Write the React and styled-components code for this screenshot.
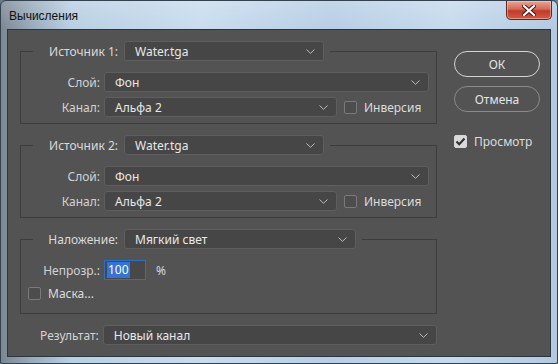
import React from "react";
import styled, { createGlobalStyle } from "styled-components";

const GlobalStyle = createGlobalStyle`
  html, body {
    margin: 0;
    padding: 0;
    background: #6b7a88;
  }
`;

const Chevron = () => (
  <svg width="9" height="5" viewBox="0 0 9 5">
    <path d="M0.5 0.5 L4.5 4.3 L8.5 0.5" fill="none" stroke="#bcbcbc" strokeWidth="1" />
  </svg>
);

const Dropdown = ({ value, width }) => (
  <Select $width={width}>
    <span>{value}</span>
    <Chevron />
  </Select>
);

const Check = ({ checked, label }) => (
  <CheckWrap>
    <Box $checked={checked}>
      {checked && (
        <svg width="11" height="9" viewBox="0 0 11 9">
          <path d="M1.5 4.5 L4.2 7.2 L9.5 1.5" fill="none" stroke="#2f2f2f" strokeWidth="2" />
        </svg>
      )}
    </Box>
    <CheckText>{label}</CheckText>
  </CheckWrap>
);

const SourceGroup = ({ n }) => (
  <Group>
    <Legend>
      <LegendLabel>Источник {n}:</LegendLabel>
      <Dropdown value="Water.tga" width={200} />
    </Legend>
    <Rows>
      <Row>
        <RowLabel>Слой:</RowLabel>
        <Dropdown value="Фон" width={325} />
      </Row>
      <Row>
        <RowLabel>Канал:</RowLabel>
        <Dropdown value="Альфа 2" width={233} />
        <Spacer $w={7} />
        <Check label="Инверсия" />
      </Row>
    </Rows>
  </Group>
);

const App = () => {
  return (
    <>
      <GlobalStyle />
      <Window>
        <TitleBar>
          <Title>Вычисления</Title>
          <CloseButton>
            <svg width="14" height="11" viewBox="0 0 14 11">
              <path d="M2 1 L12 10 M12 1 L2 10" stroke="#3a1410" strokeWidth="4" strokeLinecap="square" />
              <path d="M2 1 L12 10 M12 1 L2 10" stroke="#ffffff" strokeWidth="2.2" strokeLinecap="square" />
            </svg>
          </CloseButton>
        </TitleBar>
        <Client>
          <Main>
            <SourceGroup n={1} />
            <SourceGroup n={2} />
            <Group $mt={11}>
              <Legend>
                <LegendLabel>Наложение:</LegendLabel>
                <Dropdown value="Мягкий свет" width={232} />
              </Legend>
              <Rows $pt={11} $pb={10} $gap={3}>
                <Row>
                  <RowLabel>Непрозр.:</RowLabel>
                  <NumberBox>
                    <Selected>100</Selected>
                  </NumberBox>
                  <Percent>%</Percent>
                </Row>
                <Row $pl={7}>
                  <Check label="Маска..." />
                </Row>
              </Rows>
            </Group>
            <ResultRow>
              <RowLabel>Результат:</RowLabel>
              <Dropdown value="Новый канал" width={335} />
            </ResultRow>
          </Main>
          <Side>
            <Button $primary>ОК</Button>
            <Button>Отмена</Button>
            <PreviewRow>
              <Check checked label="Просмотр" />
            </PreviewRow>
          </Side>
        </Client>
      </Window>
    </>
  );
};

export default App;

const Window = styled.div`
  box-sizing: border-box;
  width: 558px;
  height: 364px;
  border: 1px solid #34414e;
  border-radius: 6px 6px 2px 2px;
  padding: 0 6px 6px 6px;
  display: flex;
  flex-direction: column;
  background:
    linear-gradient(180deg, rgba(255, 255, 255, 0.18) 0px, rgba(255, 255, 255, 0) 28px),
    linear-gradient(90deg, #7c8792 0px, #97aabb 30px, #b9cfe4 70px, #c9dcee 200px, #b7cee5 330px, #c6daed 450px, #b2c9e0 558px);
  font-family: "Noto Sans", "Liberation Sans", sans-serif;
`;

const TitleBar = styled.div`
  height: 28px;
  display: flex;
  align-items: flex-start;
  justify-content: space-between;
`;

const Title = styled.div`
  font-family: "Liberation Sans", Arial, sans-serif;
  font-size: 12px;
  color: #111;
  padding: 8px 0 0 2px;
`;

const CloseButton = styled.div`
  box-sizing: border-box;
  width: 46px;
  height: 19px;
  margin-right: -1px;
  border: 1px solid #5a2a24;
  border-top: none;
  border-radius: 0 0 5px 5px;
  background: linear-gradient(180deg, #e9a596 0%, #d46a56 45%, #c0392a 55%, #d25b45 100%);
  box-shadow: inset 0 0 0 1px rgba(255, 220, 210, 0.45);
  display: flex;
  align-items: center;
  justify-content: center;
`;

const Client = styled.div`
  flex: 1;
  display: flex;
  background: #535353;
  border: 1px solid #2c3640;
  color: #d8d8d8;
  font-size: 12px;
`;

const Main = styled.div`
  width: 417px;
  padding: 0 0 0 12px;
  display: flex;
  flex-direction: column;
`;

const Group = styled.fieldset`
  margin: ${(p) => p.$mt ?? 11}px 0 0 0;
  padding: 0;
  border: 1px solid #3d3d3d;
  min-width: 0;
`;

const Legend = styled.legend`
  display: flex;
  align-items: center;
  margin-left: 12px;
  padding: 0 6px 0 0;
`;

const LegendLabel = styled.span`
  width: 85px;
  text-align: right;
  margin-right: 6px;
  color: #dadada;
  white-space: nowrap;
`;

const Rows = styled.div`
  display: flex;
  flex-direction: column;
  gap: ${(p) => p.$gap ?? 5}px;
  padding: ${(p) => p.$pt ?? 11}px 0 ${(p) => p.$pb ?? 6}px 0;
`;

const Row = styled.div`
  display: flex;
  align-items: center;
  height: 20px;
  padding-left: ${(p) => p.$pl ?? 0}px;
`;

const RowLabel = styled.span`
  width: 79px;
  text-align: right;
  margin-right: 4px;
  color: #d2d2d2;
  white-space: nowrap;
`;

const Select = styled.div`
  box-sizing: border-box;
  width: ${(p) => p.$width}px;
  height: 20px;
  display: flex;
  align-items: center;
  justify-content: space-between;
  padding: 0 8px 0 10px;
  background: #464646;
  border: 1px solid #5e5e5e;
  border-radius: 3px;
  color: #e8e8e8;
  white-space: nowrap;
`;

const Spacer = styled.span`
  width: ${(p) => p.$w}px;
`;

const CheckWrap = styled.label`
  display: flex;
  align-items: center;
  gap: 7px;
`;

const Box = styled.span`
  box-sizing: border-box;
  width: 13px;
  height: 13px;
  border-radius: 2px;
  border: 1px solid ${(p) => (p.$checked ? "#d6d6d6" : "#7a7a7a")};
  background: ${(p) => (p.$checked ? "#d9d9d9" : "#4d4d4d")};
  display: flex;
  align-items: center;
  justify-content: center;
`;

const CheckText = styled.span`
  color: #dcdcdc;
  white-space: nowrap;
`;

const NumberBox = styled.div`
  box-sizing: border-box;
  width: 42px;
  height: 20px;
  display: flex;
  align-items: center;
  padding-left: 2px;
  background: #484848;
  border: 1px solid #2d6fc4;
`;

const Selected = styled.span`
  background: #3474d4;
  color: #fff;
  line-height: 16px;
  padding: 0 1px;
`;

const Percent = styled.span`
  margin-left: 10px;
  color: #d8d8d8;
`;

const ResultRow = styled.div`
  display: flex;
  align-items: center;
  height: 20px;
  margin-top: 11px;
`;

const Side = styled.div`
  width: 86px;
  margin-left: 17px;
  padding-top: 21px;
  display: flex;
  flex-direction: column;
  gap: 9px;
`;

const Button = styled.div`
  box-sizing: border-box;
  height: 26px;
  border-radius: 13px;
  border: 1px solid ${(p) => (p.$primary ? "#d4d4d4" : "#8a8a8a")};
  display: flex;
  align-items: center;
  justify-content: center;
  color: #e4e4e4;
`;

const PreviewRow = styled.div`
  margin-top: 12px;
`;
